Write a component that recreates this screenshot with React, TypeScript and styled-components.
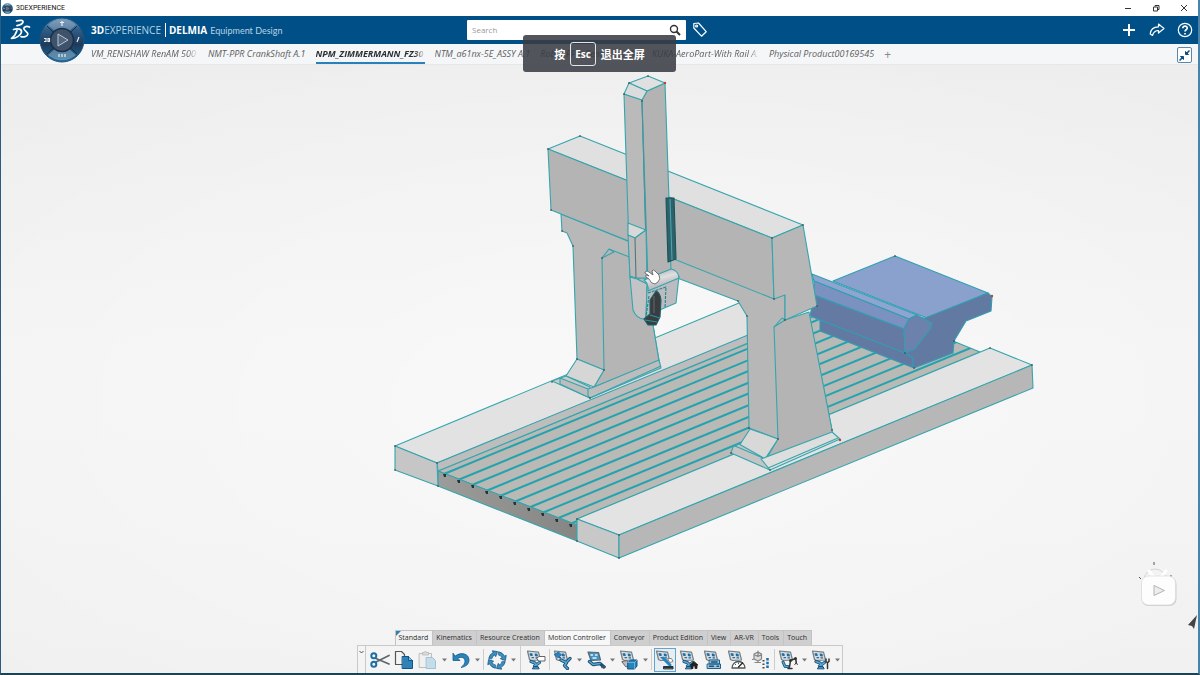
import React from "react";
import styled, { createGlobalStyle, css } from "styled-components";

const uiFont = `"Open Sans", "Noto Sans", "Noto Sans CJK SC", sans-serif`;

const GlobalStyle = createGlobalStyle`
  *, *::before, *::after { box-sizing: border-box; }
  body { margin: 0; background: #f3f3f3; font-family: ${uiFont}; }
  button, input { font-family: inherit; }
`;

const AppWindow = styled.div`
  position: relative;
  display: flex;
  flex-direction: column;
  min-height: 100vh;
  border-left: 1px solid #2c5b80;
  border-right: 2px solid #4b83a8;
  border-bottom: 2px solid #1c4353;
`;

const TitleBar = styled.header`
  display: flex;
  align-items: center;
  height: 16px;
  padding: 0 9px 0 1px;
  background: #fff;
  color: #111;
  line-height: 12px;
`;

const WindowTitle = styled.span`
  flex: 1;
  margin-left: 3px;
  font-family: Roboto, sans-serif;
  font-size: 7px;
`;

const WindowButtons = styled.div`
  display: flex;
  gap: 18px;
`;

const BareButton = styled.button`
  display: flex;
  align-items: center;
  justify-content: center;
  flex: none;
  padding: 0;
  border: 0;
  background: none;
  color: inherit;
`;

const AppBar = styled.div`
  display: grid;
  grid-template-columns: 466fr 219fr 512fr;
  align-items: center;
  height: 28px;
  background: #005087;
  color: #fff;
`;

const Brand = styled.div`
  display: flex;
  align-items: center;
  padding-left: 9px;
`;

const ProductName = styled.div`
  margin-left: 60px;
  color: #b9d2e4;
  font-size: 10px;
  line-height: 14px;
  white-space: nowrap;
  b { color: #fff; }
`;

const Vendor = styled.b`
  margin-left: 4px;
  padding-left: 3px;
  border-left: 1px solid #fff;
`;

const RoleName = styled.span`
  margin-left: 3px;
  font-family: Lato, sans-serif;
  font-size: 9px;
`;

const SearchBox = styled.form`
  display: flex;
  align-items: center;
  width: 100%;
  height: 20px;
  padding: 0 5px;
  border-radius: 1px;
  background: #fff;
  color: #333;
  input {
    flex: 1;
    min-width: 0;
    padding: 0;
    border: 0;
    outline: 0;
    background: none;
    font-size: 8px;
    line-height: 12px;
  }
  input::placeholder { color: #999; opacity: 1; }
`;

const BarActions = styled.div`
  display: flex;
  align-items: center;
  justify-content: space-between;
  padding: 0 5px 0 7px;
`;

const ActionGroup = styled.div`
  display: flex;
  gap: 12px;
`;

const TabStrip = styled.nav`
  display: flex;
  align-items: flex-start;
  gap: 10px;
  height: 21px;
  padding: 0 5px 0 90px;
  border-bottom: 1px solid #e6e7e9;
  background: #f5f6f8;
`;

const DocumentTab = styled.a<{ $active?: boolean; $long?: boolean }>`
  width: ${(p) => (p.$long ? "107px" : "auto")};
  height: 20px;
  overflow: hidden;
  color: #5b5d60;
  font-size: 9px;
  font-style: italic;
  line-height: 20px;
  text-decoration: none;
  white-space: nowrap;
  border-bottom: 2px solid transparent;
  ${(p) => p.$active && css`
    width: 109px;
    border-bottom-color: #2b7fbd;
    color: #2d2f33;
    font-weight: 700;
  `}
`;

const TabLabel = styled.span<{ $fade?: boolean }>`
  display: block;
  overflow: hidden;
  ${(p) => p.$fade && css`
    mask-image: linear-gradient(90deg, #000 90%, transparent);
  `}
`;

const AddTab = styled(BareButton)`
  height: 20px;
  color: #888;
  font-size: 12px;
`;

const RestoreButton = styled(BareButton)`
  width: 15px;
  height: 16px;
  margin: 3px 1px 0 auto;
  border: 1px solid #5c86aa;
  border-radius: 2px;
  background: #fff;
  color: #0c4d84;
`;

const Compass = styled(BareButton)`
  position: absolute;
  top: 17px;
  left: 38px;
`;

const ToastLayer = styled.div`
  position: absolute;
  top: 35px;
  left: 0;
  right: 0;
  display: flex;
  justify-content: center;
  pointer-events: none;
`;

const Toast = styled.div`
  display: flex;
  align-items: center;
  gap: 5px;
  height: 37px;
  padding: 0 31px;
  border-radius: 3px;
  background: rgba(56, 60, 67, 0.87);
  color: #fff;
  font-family: "Noto Sans CJK SC", sans-serif;
  font-size: 11px;
  font-weight: 700;
  line-height: 16px;
`;

const KeyCap = styled.kbd`
  padding: 3px 4px;
  border: 1px solid #e6e6e6;
  border-radius: 3px;
  font-family: "Open Sans", sans-serif;
  font-size: 10px;
  line-height: 16px;
`;

const Workspace = styled.main`
  position: relative;
  display: flex;
  flex: 1;
  flex-direction: column;
  align-items: center;
  background:
    radial-gradient(ellipse 70% 70% at 52% 56%, rgba(255, 255, 255, 0.5) 0, rgba(255, 255, 255, 0.25) 55%, transparent 100%),
    linear-gradient(#ededed, #f3f3f3 50%, #f0f0f0);
`;

const Scene = styled.svg`
  flex: 1;
  width: 100%;
  min-height: 0;
`;

const CornerWidget = styled.svg`
  position: absolute;
  right: 0;
  bottom: 43px;
`;

const Dock = styled.section`
  display: flex;
  flex-direction: column;
`;

const DockTabs = styled.div`
  display: flex;
  align-self: flex-start;
  margin-left: 38px;
`;

const DockTab = styled.button<{ $lit?: boolean; $first?: boolean }>`
  height: 15px;
  padding: 0 4px 0 3px;
  border: 1px solid #c3c3c3;
  border-left-width: ${(p) => (p.$first ? "1px" : "0")};
  border-bottom: 0;
  background: ${(p) => (p.$lit ? "#f7f7f7" : "#cfcfcf")};
  ${(p) => p.$first && css`
    background: linear-gradient(135deg, #2d7fb8 3px, #f2f2f2 4px);
  `}
  color: #2c2c2c;
  font-size: 7px;
  line-height: 12px;
  white-space: nowrap;
`;

const Toolbar = styled.div`
  display: flex;
  align-items: center;
  height: 28px;
  border: 1px solid #c9c9c9;
  border-bottom: 0;
  background: #f4f4f4;
`;

const Grip = styled(BareButton)`
  align-self: stretch;
  align-items: flex-start;
  width: 8px;
  margin-right: 2px;
  padding-top: 4px;
  border-right: 1px solid #c9c9c9;
  color: #555;
`;

const ToolButton = styled(BareButton)<{ $selected?: boolean }>`
  width: 24px;
  height: 24px;
  ${(p) => p.$selected && css`
    width: 22px;
    margin: 0 1px;
    border: 1px solid #62a5cb;
    background: #e6eef4;
  `}
`;

const CaretButton = styled(BareButton)`
  width: 9px;
  height: 24px;
  color: #777;
`;

const Divider = styled.span<{ $wide?: boolean }>`
  align-self: stretch;
  width: 1px;
  margin: ${(p) => (p.$wide ? "0 3px 0 2px" : "3px 1px")};
  background: #cdcdcd;
`;

const blue = "#1c6ea4";

/* Small drawings */

const DsLogo = () => (
  <svg width="21" height="22" viewBox="0 0 21 22" fill="none" stroke="#fff" strokeWidth="1.7" strokeLinecap="round" strokeLinejoin="round" aria-label="Dassault Systemes">
    <path d="M6.500 2c3.500-1 7-1 6.500 1C12.500 5 9.500 6.200 7 6.700" />
    <path d="M3.500 10.500c4.500-1.500 9-.5 7.800 3.200-1 3-5.300 5.500-9.800 5.800 2.500-1.800 4.500-5 5.500-8" />
    <path d="M19.500 8c-2.500-1-5.500-.6-5.700 1.400-.2 2.100 4.600 3.500 4 6-.6 2.300-4.300 2.800-6.800 2.300" />
  </svg>
);

const CompassDrawing = ({ size }: { size: number }) => (
  <svg width={size} height={size} viewBox="0 0 46 46">
    <defs>
      <linearGradient id={`ring${size}`} x1="0" y1="0" x2="0" y2="1">
        <stop offset="0" stopColor="#7d9fbd" />
        <stop offset=".25" stopColor="#315f88" />
        <stop offset=".6" stopColor="#1e3a5a" />
        <stop offset="1" stopColor="#1c6b9f" />
      </linearGradient>
    </defs>
    <circle cx="23" cy="23" r="22" fill={`url(#ring${size})`} stroke="#1b527f" />
    <path d="M9 8a21 21 0 0 1 28 0L29 15a12 12 0 0 0-12 0z" fill="#88a5c0" opacity=".55" />
    <path d="M9 38a21 21 0 0 0 28 0L29 31a12 12 0 0 1-12 0z" fill="#a9c3d8" opacity=".45" />
    <path d="M8 9l8 8M38 9l-8 8M8 37l8-8M38 37l-8-8" stroke="#17324c" strokeWidth="1" />
    <circle cx="23" cy="23" r="11.500" fill="#3e526b" stroke="#1a2f48" strokeWidth="1.500" />
    <path d="M19 17l10 6-10 6z" fill="#53677e" stroke="#b7c7d6" />
    <path d="M23 4v5M21 5.500h4M38 25l2-5M5 21.500h2v3H5M9 21.500v3h1.500v-3zM20 37v3M23 37v3M26 37v3" stroke="#e6eef5" strokeWidth="1.200" fill="none" />
  </svg>
);

const Caret = () => (
  <svg width="5" height="4" viewBox="0 0 5 4"><path d="M0 .5h5L2.500 3.500z" fill="currentColor" /></svg>
);

const Icon = ({ children }: { children: React.ReactNode }) => (
  <svg width="20" height="20" viewBox="0 0 20 20" fill="none" strokeLinecap="round" strokeLinejoin="round">{children}</svg>
);

/* Tilted control panel shared by the motion controller commands */
const Panel = () => (
  <g>
    <path d="M1.500 1l11 1.200 2 7.800-9 .5-2-1z" fill="#d9dde0" stroke="#777d81" strokeWidth="1.200" />
    <path d="M4.200 3.800l1.600.2.300 1.400-1.600-.2zM9.300 4.200l1.600.2.300 1.400-1.600-.2zM6 7.600l1.500.1M10 7.800l1.500.1" fill={blue} stroke={blue} strokeWidth="1.300" />
  </g>
);

/* Jointed manipulator drawn beneath the panel */
const RobotArm = () => (
  <g>
    <path d="M5 11.500l4 1.500 1 3M8.500 16l5-3.500" stroke="#174f78" strokeWidth="3.200" />
    <path d="M5 11.500l4 1.500 1 3M8.500 16l5-3.500" stroke="#55a6d1" strokeWidth="1.600" />
    <path d="M6.500 18.500l1.500-2h4l1 2z" fill="#3d92c4" stroke="#174f78" />
  </g>
);

const CutIcon = () => (
  <Icon>
    <path d="M6 8.500l13 5.500M6 12l13-6.500" stroke="#60676c" strokeWidth="1.700" />
    <circle cx="3.800" cy="5.800" r="2.500" stroke={blue} strokeWidth="2" />
    <circle cx="3.800" cy="14.200" r="2.500" stroke={blue} strokeWidth="2" />
  </Icon>
);
const CopyIcon = () => (
  <Icon>
    <path d="M1.500 1.500h6l3 3v10h-9z" fill="#f4f4f4" stroke="#555" strokeWidth="1.200" />
    <path d="M8.500 6.500h6l4 4v8h-10z" fill="#2d83b8" stroke="#145384" />
    <path d="M14.500 6.500v4h4" fill="#8dc5e2" stroke="#145384" />
  </Icon>
);
const PasteIcon = () => (
  <Icon>
    <path d="M1.500 3.500h12v14h-12z" fill="#f0f0f0" stroke="#bdbdbd" />
    <path d="M4.500 4.500v-2h2a1 1 0 0 1 2 0h2v2z" fill="#ddd" stroke="#bbb" />
    <path d="M8.500 7.500h6l3 3v8h-9z" fill="#c5dcea" stroke="#9fc2d6" />
  </Icon>
);
const UndoIcon = () => (
  <Icon>
    <path d="M2 3.500v7h7L6.700 8.200C10 6.500 14 7.500 14 11c0 2.500-1.500 4.500-4 6.500 5-.8 8-3.500 8-7.500C18 3.800 10 1.500 4.400 5.900z" fill="#2c83ba" stroke="#175b8b" strokeWidth=".8" />
  </Icon>
);
const UpdateIcon = () => (
  <Icon>
    <g fill="#3b90c2" stroke="#155582" strokeWidth=".8">
      {[0, 90, 180, 270].map((turn) => (
        <path key={turn} transform={`rotate(${turn} 10 10)`} d="M1.800 8A8.500 8.500 0 0 1 6.200 2.400L5.300.8l5.200.8-1.800 5-1.100-1.700A5.500 5.500 0 0 0 4.800 8.500z" />
      ))}
    </g>
  </Icon>
);
const ControllerTagIcon = () => (
  <Icon><Panel /><RobotArm /><path d="M11 8l2-1.500h6v4.500h-6z" fill="#fff" stroke="#666" /></Icon>
);
const ControllerRobotIcon = () => (
  <Icon>
    <Panel />
    <path d="M1.500 4.500l4-2.500 3 3-3.500 2.500z" fill="#2c83ba" stroke={blue} />
    <path d="M8 10l5 2.500 4-4M13.500 13l-2 2.500 3 3" stroke="#174f78" strokeWidth="3.200" />
    <path d="M8 10l5 2.500 4-4M13.500 13l-2 2.500 3 3" stroke="#55a6d1" strokeWidth="1.500" />
  </Icon>
);
const ArmIcon = () => (
  <Icon>
    <path d="M2 2l10.500.5 2 7.500-9.500.5z" fill="#4093c4" stroke="#5d666c" strokeWidth="1.200" />
    <path d="M5 5h1.500M9.500 5h1.500M7 8h3" stroke="#e4f2f9" strokeWidth="1.500" />
    <path d="M3.500 11.500l3.500 3 7-1 4 3.500" stroke="#174f78" strokeWidth="3.400" />
    <path d="M3.500 11.500l3.500 3 7-1" stroke="#55a6d1" strokeWidth="1.500" />
    <path d="M16 17.500l3-1" stroke="#555" strokeWidth="1.500" />
  </Icon>
);
const ControllerBoxIcon = () => (
  <Icon><Panel /><path d="M3 12l4 5 4-2-3-4z" fill="#b6bec4" stroke="#666" /><path d="M9 12.500l2.500-2.500h6.500v6l-2.500 3H9z" fill="#2583bd" stroke="#155582" /><path d="M9 12.500h6.500l2.500-2.500M15.500 12.500V19" stroke="#78bce0" strokeWidth=".8" /></Icon>
);
const TeachIcon = () => (
  <Icon><Panel /><path d="M8 8l7 7" stroke="#2583bd" strokeWidth="3" /><path d="M13 8.500h3.500l1.500 3-3 1z" fill="#fff" stroke="#888" /><path d="M8.500 18.500v-2h9.500v2z" fill="#28323a" stroke="#28323a" /></Icon>
);
const HomeIcon = () => (
  <Icon><Panel /><RobotArm /><path d="M11 15l4-3.500 4 3.500h-1v3.500h-2V16h-2v2.500h-2V15z" fill="#222" stroke="#222" strokeWidth=".8" /></Icon>
);
const StackIcon = () => (
  <Icon><Panel /><path d="M6.500 10h10v4h-10zM4.500 14h13v4.500h-13z" fill="#9ec8df" stroke="#1d5f8c" /><path d="M8.500 12h5.500M6.500 16.300h4M14 16.300h1.500" stroke="#174f78" strokeWidth="1.600" /></Icon>
);
const GaugeIcon = () => (
  <Icon><Panel /><path d="M5 18a6.500 6.500 0 0 1 13 0z" fill="#fff" stroke="#555" strokeWidth="1.300" /><path d="M11.500 17l4-4" stroke="#222" strokeWidth="1.300" /><path d="M8 14l.7.7M11.500 12.800v1" stroke={blue} /></Icon>
);
const SequenceIcon = () => (
  <Icon>
    <path d="M3 4l4-2 3.500 2v5L7 11 3 9zM7 1v5.500M3 4.500l4 2 3.500-2M1.500 9.500L3 9M4 12.500h5.500M7 11v1.500" fill="#ddd" stroke="#858585" strokeWidth="1.200" />
    <path d="M12.500 10v9" stroke="#444" strokeWidth="2" strokeDasharray="1.500 2" strokeLinecap="butt" />
    <path d="M16.500 8v11" stroke={blue} strokeWidth="2.500" strokeDasharray="2.500 1.200" strokeLinecap="butt" />
  </Icon>
);
const PathIcon = () => (
  <Icon><Panel /><path d="M5 12l2 4.500h3" stroke="#174f78" strokeWidth="3" /><path d="M5 12l2 4.500h3" stroke="#55a6d1" strokeWidth="1.400" /><path d="M11.500 17l1-6.500 5-2 .8 4M10 18.500h4" stroke="#333" strokeWidth="1.500" /><circle cx="12.500" cy="10.500" r="1.500" fill="#333" /><circle cx="17.500" cy="8.500" r="1.500" fill="#333" /><path d="M16.800 14.500l1.500-2 1 2" stroke="#333" /></Icon>
);
const ToolPathIcon = () => (
  <Icon><Panel /><RobotArm /><path d="M15 9v2.500l1.500 1.300L18 11.500V9M16.500 13v5.500" stroke="#333" strokeWidth="1.500" /></Icon>
);

type Tool =
  | { kind: "tool"; name: string; icon: React.ReactNode; menu?: boolean; selected?: boolean }
  | { kind: "divider"; wide?: boolean };

const tools: Tool[] = [
  { kind: "tool", name: "Cut", icon: <CutIcon /> },
  { kind: "tool", name: "Copy", icon: <CopyIcon /> },
  { kind: "tool", name: "Paste", icon: <PasteIcon />, menu: true },
  { kind: "tool", name: "Undo", icon: <UndoIcon />, menu: true },
  { kind: "divider" },
  { kind: "tool", name: "Update", icon: <UpdateIcon />, menu: true },
  { kind: "divider", wide: true },
  { kind: "tool", name: "Motion controller", icon: <ControllerTagIcon /> },
  { kind: "divider" },
  { kind: "tool", name: "Robot controller", icon: <ControllerRobotIcon />, menu: true },
  { kind: "tool", name: "Arm", icon: <ArmIcon />, menu: true },
  { kind: "tool", name: "Device", icon: <ControllerBoxIcon />, menu: true },
  { kind: "divider" },
  { kind: "tool", name: "Jog", icon: <TeachIcon />, selected: true },
  { kind: "tool", name: "Home positions", icon: <HomeIcon /> },
  { kind: "tool", name: "Profiles", icon: <StackIcon /> },
  { kind: "tool", name: "Speed", icon: <GaugeIcon /> },
  { kind: "tool", name: "Sequence", icon: <SequenceIcon /> },
  { kind: "divider" },
  { kind: "tool", name: "Path", icon: <PathIcon />, menu: true },
  { kind: "tool", name: "Tool path", icon: <ToolPathIcon />, menu: true },
];

const dockTabs = ["Standard", "Kinematics", "Resource Creation", "Motion Controller", "Conveyor", "Product Edition", "View", "AR-VR", "Tools", "Touch"];

const documents = [
  { name: "VM_RENISHAW RenAM 500", long: true },
  { name: "NMT-PPR CrankShaft A.1" },
  { name: "NPM_ZIMMERMANN_FZ30", long: true, active: true },
  { name: "NTM_a61nx-5E_ASSY A.1" },
  { name: "Robot PPR_Center test A.1" },
  { name: "KUKA-AeroPart-With Rail A.1", long: true },
  { name: "Physical Product00169545" },
];

/* Gantry machine model */

const slots: [number, number][] = [
  [444, 474], [458, 480], [472, 485], [486, 491], [500, 496], [514, 502], [528, 508], [542, 513], [556, 519], [570, 524],
];

const vertices: [number, number][] = [
  [548, 149], [580, 136], [551, 210], [562, 231], [573, 246], [602, 258], [577, 359], [604, 370], [642, 101], [624, 94],
  [648, 76], [629, 83], [772, 238], [803, 225], [774, 299], [817, 306], [785, 320], [747, 316], [738, 301], [749, 428],
  [778, 439], [832, 430], [731, 453], [770, 470], [552, 382], [590, 398], [395, 446], [395, 470], [437, 463], [438, 486],
  [577, 519], [577, 541], [619, 535], [619, 558], [990, 348], [1032, 365], [895, 256], [954, 341], [905, 353], [914, 368],
];

const MachineModel = () => (
  <Scene viewBox="1 65 1197 565" role="img" aria-label="Gantry machine model">
    <defs>
      <linearGradient id="cylinder" x1="0" y1="0" x2=".4" y2="1">
        <stop offset="0" stopColor="#9b9b9f" />
        <stop offset=".5" stopColor="#e0e0e2" />
        <stop offset="1" stopColor="#a5a5a8" />
      </linearGradient>
      <linearGradient id="frontWall" x1="0" y1="0" x2="1" y2="0">
        <stop offset="0" stopColor="#9c9d9b" />
        <stop offset="1" stopColor="#858683" />
      </linearGradient>
      <clipPath id="floorArea"><path d="M438 471L815 316L953 341L980 352L577 519V525z" /></clipPath>
    </defs>
    <g stroke="#35a5ad" strokeWidth="1.100" strokeLinejoin="round">
      <path d="M438 471L815 316L953 341L980 352L577 519V525z" fill="#b9b9b6" />
      <g clipPath="url(#floorArea)">
        {slots.map(([x, y]) => (
          <path key={x} d={`M${x} ${y}l480 -198`} stroke="#23a3b0" strokeWidth="2" />
        ))}
      </g>
      <path d="M438 471L577 525V541L438 486z" fill="url(#frontWall)" />
      {slots.map(([x, y]) => (
        <path key={x} d={`M${x - 1} ${y}h3v3h-2z`} fill="#23343a" stroke="none" />
      ))}

      <g stroke="#2f9fb4">
        <path d="M833 281L895 256L988 293L927 318z" fill="#8ba1cd" />
        <path d="M820 315L925 318L988 293L992 297L991 311L966 321L954 341L953 353L914 368L820 331z" fill="#6279a2" />
        <path d="M812 274L917 315L909 319L814 281z" fill="#8fa5cf" />
        <path d="M814 281L909 319L904 329L814 295z" fill="#7b91bf" />
        <path d="M814 295L904 329L905 353L810 316z" fill="#657aa3" />
        <path d="M904 329L909 319L917 315L932 323L931 328L915 349L905 353z" fill="#6c81ac" />
        <path d="M905 353L913 358V368" fill="none" />
      </g>

      <path d="M395 446L739 303L748 308V336L437 463z" fill="#e2e2e2" />
      <path d="M437 463L748 335V343L438 471z" fill="#bdbdbd" />
      <path d="M395 446L437 463L438 486L395 470z" fill="#c6c6c6" />
      <path d="M577 519L990 348L1032 365L619 535z" fill="#e3e3e3" />
      <path d="M577 519L619 535V558L577 541z" fill="#c8c8c8" />
      <path d="M619 535L1032 365L1033 388L619 558z" fill="#b7b7b7" />

      <path d="M561 214L562 231L567 233L573 246L577 359L604 370L659 360L653 325L640 246z" fill="#b8b8b8" />
      <path d="M602 258L609 249L632 258L653 325L659 361L594 387L604 370z" fill="#b5b5b5" />
      <path d="M602 258L614 252L609 249" fill="none" />
      <path d="M577 359L604 370L594 387L566 376z" fill="#d6d6d6" />
      <path d="M552 381L566 376L590 387V398z" fill="#c9c9c9" />
      <path d="M560 378L588 389L594 387L659 360L661 368L590 398L560 384z" fill="#bdbdbd" />
      <path d="M588 389V396L590 398L661 366" fill="none" />

      <path d="M660 240L774 280L785 296V320L809 315L832 430L761 458L778 439L749 428L747 316L738 301L672 276z" fill="#b7b7b7" />
      <path d="M774 327L785 320L809 312L832 430L833 436L765 461L778 439z" fill="#b4b4b4" />
      <path d="M774 327L782 318L785 320" fill="none" />
      <path d="M750 429L778 439L765 459L739 446z" fill="#d8d8d8" />
      <path d="M733 447L739 444L762 457L765 461L770 470L731 453z" fill="#c4c4c4" />
      <path d="M761 459L832 432L840 439L770 470z" fill="#dedede" />
      <path d="M768 468L838 438M735 446L763 458" fill="none" />

      <path d="M548 149L580 136L803 225L772 238z" fill="#e0e0e0" />
      <path d="M548 149L772 238L774 299L551 210z" fill="#b4b4b4" />
      <path d="M772 238L803 225L817 306L785 320V295L774 299z" fill="#b7b7b7" />

      <path d="M624 94L642 100L647 278L630 278z" fill="#bababa" />
      <path d="M642 100L647 91L665 83L669 200L671 272L648 282z" fill="#b3b3b3" />
      <path d="M666 198L674 198L676 259L668 262z" fill="#2e626a" stroke="#1b5259" />
      <path d="M670 199L672 260" stroke="#4ba4ad" />
      <path d="M629 83L648 76L665 83L647 91z" fill="#e0e0e0" />
      <path d="M629 83L647 91L642 100L624 94z" fill="#dcdcdc" />
      <path d="M642 101L647 278" stroke="#4a9299" />
      <path d="M628 223L646 230L635 238L628 235z" fill="#d8d8d8" />
      <path d="M628 235L635 238L646 230L647 278H636L630 276z" fill="#b9b9b9" />
      <path d="M635 238L636 278" stroke="#5b7478" />

      <path d="M630 277L637 279L647 284L646 319Q637 320 633 310z" fill="#c4c4c6" />
      <path d="M647 287L679 276L676 303L662 309L646 318z" fill="#bcbcc0" />
      <path d="M644 280L671 269Q678 270 679 278L648 291Q649 284 644 280z" fill="url(#cylinder)" />
      <path d="M648 293L666 287L665 308M649 296L646 317" strokeDasharray="3 1" fill="none" stroke="#1f858c" />
      <path d="M656 291Q660 292 661 300L660 317L656 325H648L644 319L650 314V300z" fill="#3a3d3f" stroke="#1d5f66" />
      <path d="M650 315L660 318M645 320L657 322" stroke="#2496a0" />
      <path d="M654 296V313" stroke="#626668" />
    </g>
    <g fill="#49302f">
      {vertices.map(([x, y]) => <circle key={`${x}-${y}`} cx={x} cy={y} r=".8" />)}
    </g>
    <g fill="#c5402f"><circle cx="665" cy="83" r="1.200" /><circle cx="992" cy="296" r="1.200" /><circle cx="840" cy="440" r="1.200" /></g>
    <path d="M645 272q2-2 4 0l4 3-1-4q1-2 3 0l4 4q2 4-1 7l-3 2q-4 0-6-5l-3-2q-1-2 1-2l2 1-4-3z" fill="#fff" stroke="#555" strokeWidth=".8" />
  </Scene>
);

export default function App() {
  return (
    <>
      <GlobalStyle />
      <AppWindow>
        <TitleBar>
          <CompassDrawing size={11} />
          <WindowTitle>3DEXPERIENCE</WindowTitle>
          <WindowButtons>
            <BareButton aria-label="Minimize">
              <svg width="10" height="10" viewBox="0 0 10 10"><path d="M2 5.500h6" stroke="#333" /></svg>
            </BareButton>
            <BareButton aria-label="Restore">
              <svg width="10" height="10" viewBox="0 0 10 10" fill="none" stroke="#333"><path d="M2.500 4h4v4h-4zM4 3.500v-1h4v4H7" /></svg>
            </BareButton>
            <BareButton aria-label="Close">
              <svg width="10" height="10" viewBox="0 0 10 10"><path d="M2 2l6 6M8 2l-6 6" stroke="#333" /></svg>
            </BareButton>
          </WindowButtons>
        </TitleBar>

        <AppBar>
          <Brand>
            <DsLogo />
            <ProductName>
              <b>3D</b>EXPERIENCE<Vendor>DELMIA</Vendor>
              <RoleName>Equipment Design</RoleName>
            </ProductName>
          </Brand>
          <SearchBox role="search" onSubmit={(e) => e.preventDefault()}>
            <input aria-label="Search" placeholder="Search" />
            <BareButton aria-label="Run search">
              <svg width="12" height="12" viewBox="0 0 12 12" fill="none" stroke="#333" strokeWidth="1.400"><circle cx="5" cy="5" r="3.500" /><path d="M7.500 7.500l3.500 3.500" strokeWidth="2" /></svg>
            </BareButton>
          </SearchBox>
          <BarActions>
            <BareButton aria-label="Tags">
              <svg width="14" height="16" viewBox="0 0 14 16" fill="none" stroke="#fff" strokeWidth="1.200" strokeLinejoin="round"><path d="M.8 1.500L5.500 1l7.700 8.700-4.700 4.500L.8 6z" /><circle cx="3.600" cy="4" r="1" /></svg>
            </BareButton>
            <ActionGroup>
              <BareButton aria-label="Add">
                <svg width="16" height="16" viewBox="0 0 16 16" stroke="#fff" strokeWidth="2"><path d="M8 2v12M2 8h12" /></svg>
              </BareButton>
              <BareButton aria-label="Share">
                <svg width="16" height="16" viewBox="0 0 16 16" fill="none" stroke="#fff" strokeWidth="1.200" strokeLinejoin="round"><path d="M9.500 2l5.500 4.500-5.500 4.500V8.500C6 8.500 4.500 10 3.500 13.500L1.200 12C1.500 8 4.500 5 9.500 4.800z" /></svg>
              </BareButton>
              <BareButton aria-label="Help">
                <svg width="16" height="16" viewBox="0 0 16 16" fill="none" stroke="#fff" strokeWidth="1.200"><circle cx="8" cy="8" r="6.700" /><path d="M5.800 6.300c0-3 4.600-2.700 4.400-.1C10.100 7.800 8 7.800 8 9.600M8 11v1.500" strokeWidth="1.700" /></svg>
              </BareButton>
            </ActionGroup>
          </BarActions>
        </AppBar>

        <TabStrip aria-label="Open documents">
          {documents.map((doc) => (
            <DocumentTab key={doc.name} href="#" $active={doc.active} $long={doc.long}>
              <TabLabel $fade={doc.long}>{doc.name}</TabLabel>
            </DocumentTab>
          ))}
          <AddTab aria-label="New tab">+</AddTab>
          <RestoreButton aria-label="Exit full view">
            <svg width="11" height="11" viewBox="0 0 11 11" fill="currentColor" stroke="currentColor"><path d="M10.500.5L7.500 3.500M.5 10.500l3-3" strokeWidth="1.500" /><path d="M6.500 1.500v3h3zM4.500 9.500v-3h-3z" /></svg>
          </RestoreButton>
        </TabStrip>

        <Workspace>
          <MachineModel />
          <Dock aria-label="Commands">
            <DockTabs role="tablist">
              {dockTabs.map((name, i) => (
                <DockTab key={name} role="tab" aria-selected={name === "Motion Controller"} $first={i === 0} $lit={name === "Motion Controller"}>
                  {name}
                </DockTab>
              ))}
            </DockTabs>
            <Toolbar role="toolbar">
              <Grip aria-label="Collapse toolbar">
                <svg width="5" height="4" viewBox="0 0 5 4" fill="none" stroke="currentColor"><path d="M.5 1l2 2 2-2" /></svg>
              </Grip>
              {tools.map((t, i) =>
                t.kind === "divider" ? (
                  <Divider key={i} $wide={t.wide} />
                ) : (
                  <React.Fragment key={i}>
                    <ToolButton aria-label={t.name} $selected={t.selected}>{t.icon}</ToolButton>
                    {t.menu && <CaretButton aria-label={`${t.name} options`}><Caret /></CaretButton>}
                  </React.Fragment>
                )
              )}
            </Toolbar>
          </Dock>
          <CornerWidget width="64" height="74" viewBox="1134 556 64 74">
            <circle cx="1155" cy="580" r="11" fill="none" stroke="#d5d5d5" />
            <path d="M1149 571l5 6M1166 571l-5 6" stroke="#fff" strokeWidth="3" strokeLinecap="round" />
            <path d="M1154 562v3M1139 577l2 2M1170 576h2" stroke="#555" />
            <rect x="1141.500" y="577" width="35" height="29" rx="7" fill="#cfcfcf" />
            <rect x="1141.500" y="576" width="34" height="29" rx="7" fill="#fdfdfd" stroke="#dadada" strokeWidth=".7" />
            <path d="M1154 585.500v10l10.500-5z" fill="#ededed" stroke="#b4b4b4" strokeLinejoin="round" />
            <path d="M1197 615l-9 10 4 1 2 3z" fill="#444" />
          </CornerWidget>
        </Workspace>

        <Compass aria-label="Compass"><CompassDrawing size={46} /></Compass>
        <ToastLayer>
          <Toast role="status"><span>按</span><KeyCap>Esc</KeyCap><span>退出全屏</span></Toast>
        </ToastLayer>
      </AppWindow>
    </>
  );
}
